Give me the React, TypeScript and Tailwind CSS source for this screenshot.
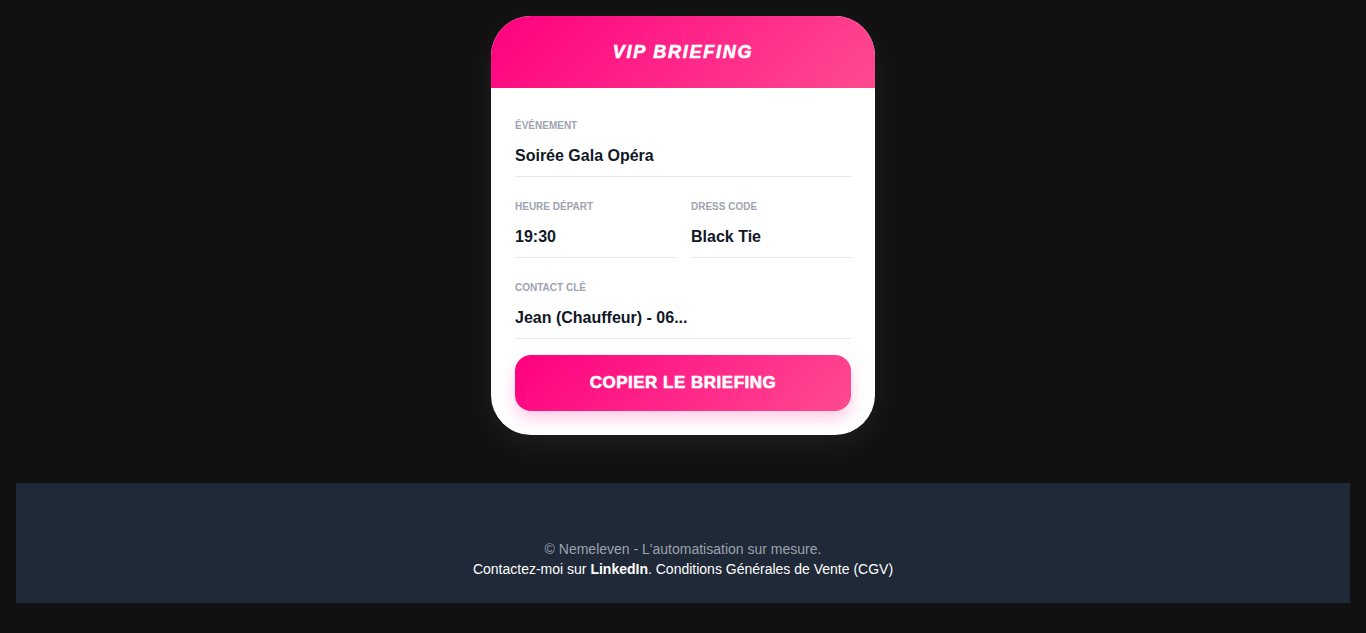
import React from "react";

const Field: React.FC<{ label: string; value: string }> = ({ label, value }) => (
  <div className="flex flex-col">
    <span className="text-[10px] font-bold uppercase text-[#a0a3b1] leading-[12px]">{label}</span>
    <div className="mt-[13px] pb-[9px] border-b border-[#e5e7eb] text-[16px] font-bold text-[#111827] leading-[22px] whitespace-nowrap overflow-hidden">
      {value}
    </div>
  </div>
);

export default function App() {
  return (
    <div className="min-h-screen bg-[#111111] p-4 font-['Liberation_Sans',Arial,sans-serif]">
      <div className="flex justify-center">
        <div className="w-[384px] bg-white rounded-[40px] overflow-hidden shadow-[0_10px_30px_rgba(255,255,255,0.06)]">
          <div className="h-[72px] flex items-center justify-center bg-[linear-gradient(135deg,#ff0080,#ff4a90)]">
            <h1 className="text-white text-[18px] font-black italic tracking-[1.75px] uppercase [-webkit-text-stroke:0.6px_white]">
              VIP Briefing
            </h1>
          </div>
          <div className="px-6 pt-[32px] pb-6 flex flex-col gap-[24px]">
            <Field label="Événement" value="Soirée Gala Opéra" />
            <div className="grid grid-cols-2 gap-4">
              <Field label="Heure départ" value="19:30" />
              <Field label="Dress code" value="Black Tie" />
            </div>
            <Field label="Contact clé" value="Jean (Chauffeur) - 06..." />
            <button className="-mt-[8px] w-full h-[56px] rounded-[16px] bg-[linear-gradient(135deg,#ff0080,#ff4a90)] text-white text-[17px] font-black uppercase tracking-[0.5px] [-webkit-text-stroke:0.6px_white] shadow-[0_8px_16px_rgba(255,0,128,0.2)]">
              Copier le briefing
            </button>
          </div>
        </div>
      </div>
      <footer className="mt-[48px] bg-[#1f2937] pt-[56px] pb-[24px] text-center text-[14px] leading-[20px]">
        <p className="text-[#9ca3af]">© Nemeleven - L'automatisation sur mesure.</p>
        <p className="text-white">
          Contactez-moi sur <span className="font-bold">LinkedIn</span>. Conditions Générales de Vente (CGV)
        </p>
      </footer>
    </div>
  );
}
